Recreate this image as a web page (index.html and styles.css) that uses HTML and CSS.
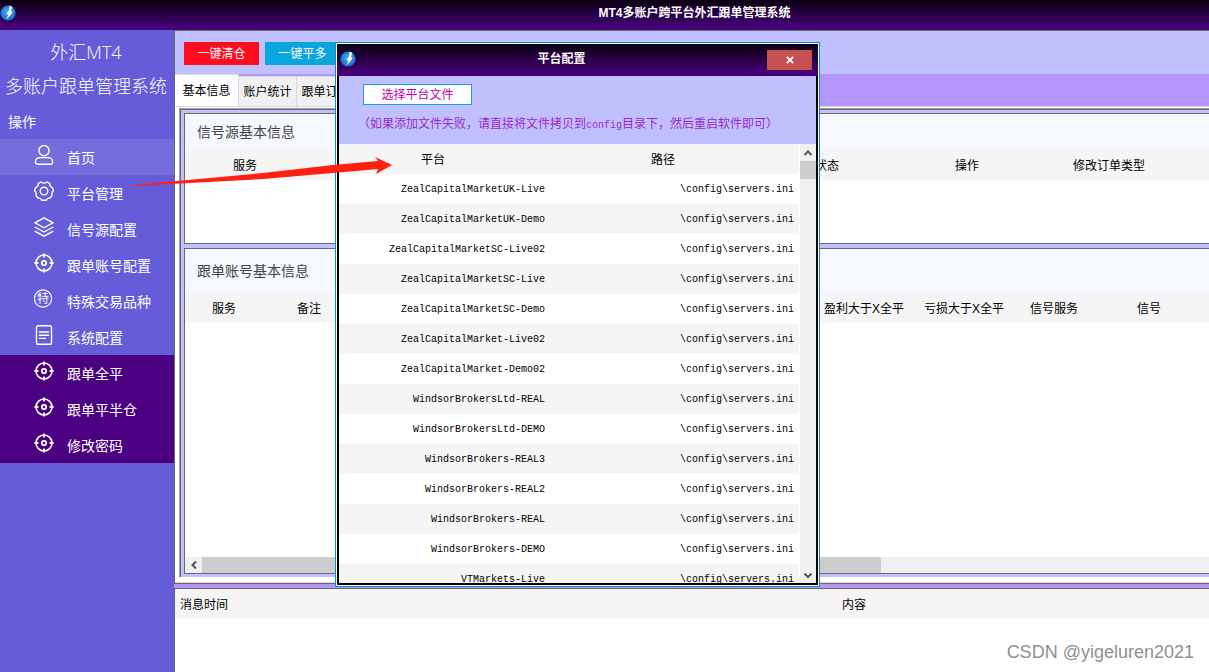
FILE: index.html
```html
<!DOCTYPE html>
<html lang="zh-CN">
<head>
<meta charset="utf-8">
<title>MT4多账户跨平台外汇跟单管理系统</title>
<link rel="stylesheet" href="styles.css">
</head>
<body>
<svg class="defs" aria-hidden="true">
  <defs>
    <radialGradient id="ball" cx="50%" cy="45%" r="55%"><stop offset="0" stop-color="#4db4f7"/><stop offset="1" stop-color="#1668c8"/></radialGradient>
    <symbol id="logo" viewBox="0 0 16 16"><circle cx="8" cy="8" r="7.6" fill="url(#ball)"/><path d="M9.500 .6 12.400 2 10.800 6.200 12.800 6.800 10.600 10 6 14.800 8.600 9.600 6.400 9 9 5.600Z" fill="#fff"/></symbol>
    <symbol id="target" viewBox="0 0 20 20"><circle cx="10" cy="10" r="8" stroke-width="1.6"/><circle cx="10" cy="10" r="2.2" stroke-width="1.8"/><path d="M10 .4v4M10 15.6v4M.4 10h4M15.6 10h4" stroke-width="1.8"/></symbol>
  </defs>
</svg>

<header class="titlebar">
  <svg class="logo"><use href="#logo"/></svg>
  <h1>MT4多账户跨平台外汇跟单管理系统</h1>
</header>

<div class="body">
  <nav class="sidebar">
    <div class="brand"><span>外汇MT4</span><span>多账户跟单管理系统</span></div>
    <div class="group">操作</div>
    <a class="item active" href="#"><svg viewBox="0 0 20 20"><circle cx="10" cy="5.6" r="5"/><path d="M5.5 12.6h9a4 4 0 0 1 4 4v.6a2 2 0 0 1-2 2h-13a2 2 0 0 1-2-2v-.6a4 4 0 0 1 4-4Z"/></svg><span>首页</span></a>
    <a class="item" href="#"><svg viewBox="0 0 20 20"><circle cx="10" cy="10" r="3.8"/><path d="M7 1Q10 3.200 13 1L15.500 2.300Q15.600 5.500 18.600 7L19.300 10Q17.200 11.500 18 14.600L16.200 17Q13.500 16.400 12.200 19.300H7.800Q6.500 16.400 3.800 17L2 14.600Q2.800 11.500.7 10L1.400 7Q4.400 5.500 4.500 2.300Z"/></svg><span>平台管理</span></a>
    <a class="item" href="#"><svg viewBox="0 0 20 20"><path d="M10 .8 19 5.800 10 10.800 1 5.800ZM.8 10 10 15l9.200-5M.8 14.200 10 19.200l9.200-5"/></svg><span>信号源配置</span></a>
    <a class="item" href="#"><svg><use href="#target"/></svg><span>跟单账号配置</span></a>
    <a class="item" href="#"><svg viewBox="0 0 20 20"><circle cx="9" cy="9.500" r="8.600" stroke-width="1.200"/><text x="9" y="14" text-anchor="middle">特</text></svg><span>特殊交易品种</span></a>
    <a class="item" href="#"><svg viewBox="0 0 20 20"><rect x="2.500" y=".7" width="15" height="18.600" rx="1.500"/><path d="M5 7h10M5 10.200h10M5 13.400h7"/></svg><span>系统配置</span></a>
    <div class="quick">
      <a class="item" href="#"><svg><use href="#target"/></svg><span>跟单全平</span></a>
      <a class="item" href="#"><svg><use href="#target"/></svg><span>跟单平半仓</span></a>
      <a class="item" href="#"><svg><use href="#target"/></svg><span>修改密码</span></a>
    </div>
  </nav>

  <main class="content">
    <section class="workspace">
      <div class="toolbar">
        <button class="clear">一键清仓</button>
        <button class="long">一键平多</button>
      </div>
      <div class="tabs" role="tablist">
        <button class="tab selected" role="tab" aria-selected="true">基本信息</button>
        <button class="tab" role="tab">账户统计</button>
        <button class="tab" role="tab">跟单订单</button>
      </div>
      <div class="page">
        <div class="frame">
          <section class="card source">
            <h2>信号源基本信息</h2>
            <table class="grid">
              <colgroup><col class="w120"><col class="w452"><col class="w140"><col class="w140"><col class="w144"><col></colgroup>
              <thead><tr><th>服务</th><th></th><th>状态</th><th>操作</th><th>修改订单类型</th><th></th></tr></thead>
            </table>
          </section>
          <section class="card follow">
            <h2>跟单账号基本信息</h2>
            <table class="grid">
              <colgroup><col class="w78"><col class="w92"><col class="w459"><col class="w100"><col class="w100"><col class="w80"><col class="w110"><col></colgroup>
              <thead><tr><th>服务</th><th>备注</th><th></th><th>盈利大于X全平</th><th>亏损大于X全平</th><th>信号服务</th><th>信号</th><th></th></tr></thead>
            </table>
            <div class="hscroll">
              <button aria-label="向左滚动"><svg viewBox="0 0 8 8"><path d="M6 .5 2.500 4 6 7.500"/></svg></button>
              <div class="thumb"></div>
            </div>
          </section>
        </div>
      </div>
    </section>
    <section class="messages">
      <table class="grid">
        <colgroup><col class="w58"><col></colgroup>
        <thead><tr><th>消息时间</th><th class="body-col">内容</th></tr></thead>
      </table>
    </section>
  </main>
</div>

<section class="dialog" role="dialog" aria-labelledby="dlg-title">
  <header class="dialog-bar">
    <svg class="logo"><use href="#logo"/></svg>
    <h2 id="dlg-title">平台配置</h2>
    <button class="close" aria-label="关闭"><svg viewBox="0 0 8 8"><path d="M.8.8 7.200 7.200M7.200.8.8 7.200"/></svg></button>
  </header>
  <div class="dialog-main">
    <div class="picker">
      <button>选择平台文件</button>
      <p>（如果添加文件失败，请直接将文件拷贝到<code>config</code>目录下，然后重启软件即可）</p>
    </div>
    <div class="list">
      <div class="rows">
        <table class="servers">
          <colgroup><col class="w211"><col></colgroup>
          <thead><tr><th>平台</th><th>路径</th></tr></thead>
          <tbody>
            <tr><td>ZealCapitalMarketUK-Live</td><td>\config\servers.ini</td></tr>
            <tr><td>ZealCapitalMarketUK-Demo</td><td>\config\servers.ini</td></tr>
            <tr><td>ZealCapitalMarketSC-Live02</td><td>\config\servers.ini</td></tr>
            <tr><td>ZealCapitalMarketSC-Live</td><td>\config\servers.ini</td></tr>
            <tr><td>ZealCapitalMarketSC-Demo</td><td>\config\servers.ini</td></tr>
            <tr><td>ZealCapitalMarket-Live02</td><td>\config\servers.ini</td></tr>
            <tr><td>ZealCapitalMarket-Demo02</td><td>\config\servers.ini</td></tr>
            <tr><td>WindsorBrokersLtd-REAL</td><td>\config\servers.ini</td></tr>
            <tr><td>WindsorBrokersLtd-DEMO</td><td>\config\servers.ini</td></tr>
            <tr><td>WindsorBrokers-REAL3</td><td>\config\servers.ini</td></tr>
            <tr><td>WindsorBrokers-REAL2</td><td>\config\servers.ini</td></tr>
            <tr><td>WindsorBrokers-REAL</td><td>\config\servers.ini</td></tr>
            <tr><td>WindsorBrokers-DEMO</td><td>\config\servers.ini</td></tr>
            <tr><td>VTMarkets-Live</td><td>\config\servers.ini</td></tr>
          </tbody>
        </table>
      </div>
      <div class="vscroll">
        <button aria-label="向上滚动"><svg viewBox="0 0 8 8"><path d="M.5 6 4 2.500 7.500 6"/></svg></button>
        <div class="thumb"></div>
        <button class="down" aria-label="向下滚动"><svg viewBox="0 0 8 8"><path d="M.5 2.500 4 6 7.500 2.500"/></svg></button>
      </div>
    </div>
  </div>
</section>

<svg class="arrow" viewBox="0 0 260 30" aria-hidden="true"><path d="M0 29 V30 L130 23 L200 17 L245 13 L243 18 L259 9 L242 1 L245 5 L200 9 L130 17 Z" fill="#ff2012"/></svg>
<div class="watermark">CSDN @yigeluren2021</div>
</body>
</html>
```
FILE: styles.css
```css
* { box-sizing: border-box; }

body {
  margin: 0;
  height: 100vh;
  display: flex;
  flex-direction: column;
  position: relative;
  overflow: hidden;
  background: #fff;
  color: #000;
  font: 12px/16px "Liberation Sans", "Noto Sans CJK SC", sans-serif;
}

h1, h2, p { margin: 0; font-weight: 400; }
button { border: 0; padding: 0; font: inherit; color: inherit; }
a { color: inherit; text-decoration: none; }
.defs { position: absolute; width: 0; height: 0; }
.logo { width: 16px; height: 16px; flex: none; }

.titlebar {
  flex: none;
  height: 30px;
  display: flex;
  align-items: center;
  padding-bottom: 4px;
  background: linear-gradient(#0a0010, #4b0082);
  color: #fff;
}
.titlebar h1 {
  flex: 1;
  padding-left: 164px;
  text-align: center;
  font-size: 12px;
  font-weight: 700;
}

.body { flex: 1; min-height: 0; display: flex; }

.sidebar {
  width: 174px;
  flex: none;
  background: #655cd9;
  color: #fff;
  font-family: "Noto Sans CJK SC", sans-serif;
  font-size: 14px;
}
.brand {
  display: flex;
  flex-direction: column;
  align-items: center;
  padding: 5px 2px 9px 0;
  font-family: "Open Sans", "Noto Sans CJK SC", sans-serif;
  font-size: 18px;
  line-height: 34px;
  font-weight: 300;
  white-space: nowrap;
}
.group { height: 27px; padding-left: 8px; line-height: 18px; }
.item {
  display: flex;
  align-items: center;
  gap: 13px;
  height: 36px;
  padding-left: 34px;
  line-height: 20px;
}
.item svg {
  width: 20px;
  height: 20px;
  margin-bottom: 4px;
  fill: none;
  stroke: #fff;
  stroke-width: 1.4;
}
.item span { margin-bottom: 1px; }
.item text { font-size: 12px; fill: #fff; stroke: none; }
.item.active { background: #756ddc; }
.quick { background: #4b0082; }

.content {
  flex: 1;
  min-width: 0;
  display: flex;
  flex-direction: column;
  gap: 4px;
  background: #b496fa;
}
.workspace, .messages { border: solid #696969; border-width: 1px 0 0 1px; }
.workspace {
  flex: 1;
  min-height: 0;
  display: flex;
  flex-direction: column;
  border-bottom-width: 1px;
}
.messages { flex: none; height: 84px; background: #fff; }

.toolbar {
  height: 43px;
  flex: none;
  display: flex;
  gap: 6px;
  padding: 11px 9px 9px;
  background: #c0c0ff;
  color: #fff;
}
.toolbar button { width: 75px; }
.toolbar .clear { background: #ff0c20; }
.toolbar .long { background: #0aa5dd; }

.tabs { height: 32px; flex: none; display: flex; align-items: flex-end; }
.tab {
  width: 58px;
  height: 30px;
  background: #f0f0f0;
  border: solid #d9d9d9;
  border-width: 1px 1px 0 0;
}
.tab.selected { width: 64px; height: 32px; background: #fff; }

.page {
  flex: 1;
  min-height: 0;
  display: flex;
  padding: 1px 0 5px 4px;
  background: #fff;
  border: solid #d9d9d9;
  border-width: 1px 0;
}
.frame {
  flex: 1;
  min-width: 0;
  display: flex;
  flex-direction: column;
  gap: 4px;
  padding: 4px 0 3px 4px;
  background: #c0c0ff;
  border: solid #a0a0a0;
  border-width: 1px 0 0 1px;
  box-shadow: inset 1px 1px #696969;
}
.card {
  display: flex;
  flex-direction: column;
  background: #fff;
  border: 1px solid #696969;
  border-right: 0;
}
.card h2 {
  flex: none;
  padding-left: 12px;
  background: #f5f9ff;
  color: #444;
  font-size: 14px;
}
.source { height: 131px; flex: none; }
.source h2 { line-height: 36px; }
.follow { flex: 1; min-height: 0; }
.follow h2 { line-height: 44px; }

.grid { width: 100%; table-layout: fixed; border-collapse: collapse; }
.grid th {
  height: 30px;
  padding: 2px 0 0;
  background: #f5f5f5;
  font-weight: 400;
  white-space: nowrap;
}
.grid .body-col { padding-left: 266px; }
.w58 { width: 58px; } .w78 { width: 78px; } .w80 { width: 80px; }
.w92 { width: 92px; } .w100 { width: 100px; } .w110 { width: 110px; }
.w120 { width: 120px; } .w140 { width: 140px; } .w144 { width: 144px; }
.w211 { width: 211px; } .w452 { width: 452px; } .w459 { width: 459px; }

.hscroll { display: flex; height: 16px; margin-top: auto; background: #f0f0f0; }
.hscroll button, .vscroll button {
  display: grid;
  place-items: center;
  width: 17px;
  height: 17px;
  background: #f0f0f0;
}
.hscroll button { height: 16px; }
.hscroll svg, .vscroll svg { width: 8px; height: 8px; fill: none; stroke: #555; stroke-width: 2; }
.thumb { background: #cdcdcd; }
.hscroll .thumb { width: 679px; }

.dialog {
  position: absolute;
  left: 335px;
  top: 42px;
  width: 485px;
  height: 545px;
  display: flex;
  flex-direction: column;
  padding: 1px;
  background: #fff;
  border: 1px solid #0a8fc0;
}
.dialog-bar {
  height: 32px;
  flex: none;
  display: flex;
  align-items: center;
  padding: 0 6px 2px 3px;
  background: linear-gradient(#0a0010, #4b0082);
  color: #fff;
}
.dialog-bar h2 { flex: 1; text-align: center; font-size: 12px; font-weight: 700; }
.close { display: grid; place-items: center; width: 45px; height: 20px; margin-top: 2px; background: #c75050; }
.close svg { width: 8px; height: 8px; fill: none; stroke: #fff; stroke-width: 1.8; }
.dialog-main {
  flex: 1;
  min-height: 0;
  display: flex;
  flex-direction: column;
  border: 2px solid #000;
  border-top: 0;
}
.picker { height: 68px; flex: none; padding: 8px 19px 0; background: #c0c0ff; color: #9a2ac8; }
.picker button {
  display: block;
  width: 109px;
  height: 21px;
  margin-left: 5px;
  background: #fff;
  border: 1px solid #14a0d8;
  color: #c000b0;
}
.picker p { margin-top: 11px; white-space: nowrap; }
.picker code { font: 10px "Liberation Mono", monospace; }

.list { flex: 1; min-height: 0; display: flex; }
.rows { flex: 1; overflow: hidden; padding-right: 1px; }
.servers { width: 100%; table-layout: fixed; border-collapse: collapse; }
.servers th { height: 30px; padding: 2px 23px 0 0; background: #f5f5f5; font-weight: 400; }
.servers td {
  height: 30px;
  padding: 2px 5px 0 0;
  text-align: right;
  font: 10px/14px "Liberation Mono", monospace;
}
.servers tbody tr:nth-child(even) { background: #f5f5f5; }
.vscroll { width: 16px; display: flex; flex-direction: column; background: #f0f0f0; }
.vscroll button { width: 16px; }
.vscroll .thumb { height: 18px; }
.vscroll .down { margin-top: auto; }

.arrow { position: absolute; left: 133px; top: 156px; width: 260px; height: 30px; }
.watermark {
  position: absolute;
  right: 15px;
  bottom: 9px;
  color: #909090;
  font-size: 18px;
  line-height: 22px;
}
```
